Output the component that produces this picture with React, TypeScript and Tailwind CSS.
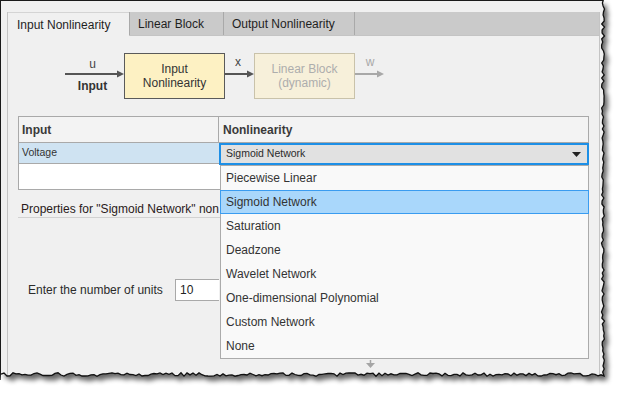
import React from "react";

function makeRand(seed: number) {
  let s = seed;
  return () => {
    s = (s * 1103515245 + 12345) % 2147483648;
    return s / 2147483648;
  };
}

function TornEdge() {
  const r = makeRand(7);
  const pts: [number, number][] = [];
  for (let y = 0; y <= 374; y += 3) {
    pts.push([603 + (r() - 0.5) * 3, y]);
  }
  pts.push([604, 376]);
  for (let x = 601; x >= 0; x -= 3) {
    pts.push([x, 374.5 + (r() - 0.5) * 3.5]);
  }
  const jag = pts.map((p, i) => `${i === 0 ? "M" : "L"}${p[0].toFixed(1)} ${p[1].toFixed(1)}`).join(" ");
  const outside = `M623 0 L603 0 ${jag.replace(/^M/, "L")} L0 394 L623 394 Z`;
  const inside = `M0 0 ${jag.replace(/^M/, "L")} Z`;
  return (
    <svg className="absolute left-0 top-0 pointer-events-none" width={623} height={394} viewBox="0 0 623 394">
      <defs>
        <clipPath id="outc">
          <path d={outside} />
        </clipPath>
        <filter id="blr" x="-10%" y="-10%" width="120%" height="120%">
          <feGaussianBlur stdDeviation="2.6" />
        </filter>
      </defs>
      <path d={outside} fill="#ffffff" />
      <g clipPath="url(#outc)">
        <path d={inside} transform="translate(4 5)" fill="#000" opacity="0.6" filter="url(#blr)" />
      </g>
      <path d={jag} fill="none" stroke="#111" strokeWidth="1.3" />
    </svg>
  );
}

function Arrow({ w, color }: { w: number; color: string }) {
  return (
    <svg width={w} height={8} viewBox={`0 0 ${w} 8`} className="block">
      <line x1={0} y1={4} x2={w - 5} y2={4} stroke={color} strokeWidth={2} />
      <polygon points={`${w - 7},0.5 ${w},4 ${w - 7},7.5`} fill={color} />
    </svg>
  );
}

const items = [
  "Piecewise Linear",
  "Sigmoid Network",
  "Saturation",
  "Deadzone",
  "Wavelet Network",
  "One-dimensional Polynomial",
  "Custom Network",
  "None",
];

export default function App() {
  return (
    <div className="relative w-[623px] h-[394px] bg-white overflow-hidden font-['Liberation_Sans',Arial,sans-serif] text-[12px] text-[#2b2b2b]">
      <div className="w-[606px] h-[380px] bg-[#f0f0f0] border-l border-t border-[#1a1a1a] pt-[11px] pl-[6px]">
        {/* tab panel */}
        <div className="w-[593px] h-[370px] border-l border-r border-[#c4c4c4] flex flex-col">
          {/* tab strip */}
          <div className="flex h-[24px] bg-[#cacaca] border-b border-[#c4c4c4]">
            <div className="w-[121px] h-[24px] bg-[#f0f0f0] border-t border-[#d4d4d4] pl-[9px] flex items-center text-[#1f1f1f] leading-[14px]">
              Input Nonlinearity
            </div>
            <div className="w-[94px] border-l border-[#a9a9a9] pl-[8px] flex items-center text-[#1f1f1f] leading-[14px]">
              Linear Block
            </div>
            <div className="w-[131px] border-l border-[#a9a9a9] pl-[8px] flex items-center text-[#1f1f1f] leading-[14px]">
              Output Nonlinearity
            </div>
            <div className="flex-1 border-l border-[#a9a9a9]" />
          </div>

          {/* body */}
          <div className="relative flex flex-col">
            {/* diagram */}
            <div className="mt-[17px] ml-[57px] flex items-center h-[46px]">
              <div className="w-[59px] flex flex-col items-center">
                <div className="h-[12px] leading-[12px] text-[#444] -mt-[2px] pr-[4px]">u</div>
                <Arrow w={59} color="#555" />
                <div className="h-[14px] leading-[14px] font-bold text-[#333] pr-[4px] mt-[1px]">Input</div>
              </div>
              <div className="w-[101px] h-[46px] bg-[#fdf1c3] border border-[#5a5a5a] flex flex-col items-center justify-center leading-[14px] text-[#333]">
                <div>Input</div>
                <div>Nonlinearity</div>
              </div>
              <div className="w-[29px] flex flex-col items-center">
                <div className="h-[12px] leading-[12px] text-[#444] -mt-[4px] mb-[2px] pr-[3px]">x</div>
                <Arrow w={29} color="#555" />
                <div className="h-[14px]" />
              </div>
              <div className="w-[101px] h-[46px] bg-[#f7f0da] border border-[#c9c2aa] flex flex-col items-center justify-center leading-[14px] text-[#adadad]">
                <div>Linear Block</div>
                <div>(dynamic)</div>
              </div>
              <div className="w-[29px] flex flex-col items-center">
                <div className="h-[12px] leading-[12px] text-[#a8a8a8] -mt-[4px] mb-[2px] pl-[1px]">w</div>
                <Arrow w={29} color="#a8a8a8" />
                <div className="h-[14px]" />
              </div>
            </div>

            {/* table */}
            <div className="relative mt-[17px] ml-[10px] w-[571px] border border-[#a9a9a9] bg-white">
              <div className="flex h-[26px] bg-[#f3f3f3] border-b border-[#a9a9a9] font-bold text-[#3a3a3a]">
                <div className="w-[200px] border-r border-[#a9a9a9] pl-[3px] flex items-center">Input</div>
                <div className="flex-1 pl-[4px] flex items-center">Nonlinearity</div>
              </div>
              <div className="flex h-[21px] border-b border-[#a9a9a9]">
                <div className="w-[200px] bg-[#cfe3f2] pl-[3px] text-[10.5px] leading-[13px] pt-[3px] text-[#333]">Voltage</div>
                <div className="flex-1 bg-[#cfe3f2]" />
              </div>
              <div className="h-[25px] bg-white" />

              {/* combobox in edit mode */}
              <div className="absolute left-[200px] top-[26px] w-[370px] h-[22px] border-2 border-[#1d8fe6] bg-[#e1e1e1] flex items-center justify-between pl-[5px] pr-[6px] text-[10.5px] text-[#2b2b2b]">
                <span>Sigmoid Network</span>
                <svg width="9" height="5" viewBox="0 0 9 5">
                  <polygon points="0,0 9,0 4.5,5" fill="#222" />
                </svg>
              </div>

              {/* open dropdown list */}
              <div className="absolute left-[201px] top-[48px] w-[369px] border border-[#ababab] bg-[#f9f9f9] z-10">
                {items.map((it, i) => (
                  <div
                    key={it}
                    className={
                      i === 1
                        ? "h-[24px] flex items-center pl-[5px] bg-[#a9d7fb] border border-[#3a9cf0] -mx-px text-[#333]"
                        : "h-[24px] flex items-center pl-[5px] text-[#333]"
                    }
                  >
                    {it}
                  </div>
                ))}
              </div>
            </div>

            {/* properties title (clipped by the open list) */}
            <div className="ml-[10px] w-[571px] pt-[12px] pb-[1px] border-b border-[#d2d2d2] leading-[14px] pl-[3px] text-[#2a1a1a]">
              <div className="w-[198px] overflow-hidden whitespace-nowrap">
                Properties for "Sigmoid Network" nonlinearity
              </div>
            </div>

            {/* number of units */}
            <div className="mt-[61px] ml-[20px] flex items-center">
              <span className="w-[147px] text-[#2b2b2b]">Enter the number of units</span>
              <div className="w-[44px] h-[22px] bg-white border-l border-t border-b border-[#a9a9a9] pl-[4px] flex items-center text-[#222]">10</div>
            </div>

            {/* scroll hint */}
            <div className="mt-[59px] ml-[358px]">
              <svg width="9" height="8" viewBox="0 0 9 8" className="block">
                <line x1="4.5" y1="0" x2="4.5" y2="4" stroke="#a5a5a5" strokeWidth="1.5" />
                <polygon points="0,3 9,3 4.5,8" fill="#a5a5a5" />
              </svg>
            </div>
          </div>
        </div>
      </div>

      {/* mouse cursor */}
      <svg className="absolute left-[534px] top-[204px]" width="14" height="20" viewBox="0 0 14 20">
        <path d="M1 1 L1 15.5 L4.6 12.2 L7.2 18.2 L9.4 17.2 L6.9 11.4 L11.6 11.4 Z" fill="#fff" stroke="#000" strokeWidth="1" strokeLinejoin="round" />
      </svg>

      <TornEdge />
    </div>
  );
}
